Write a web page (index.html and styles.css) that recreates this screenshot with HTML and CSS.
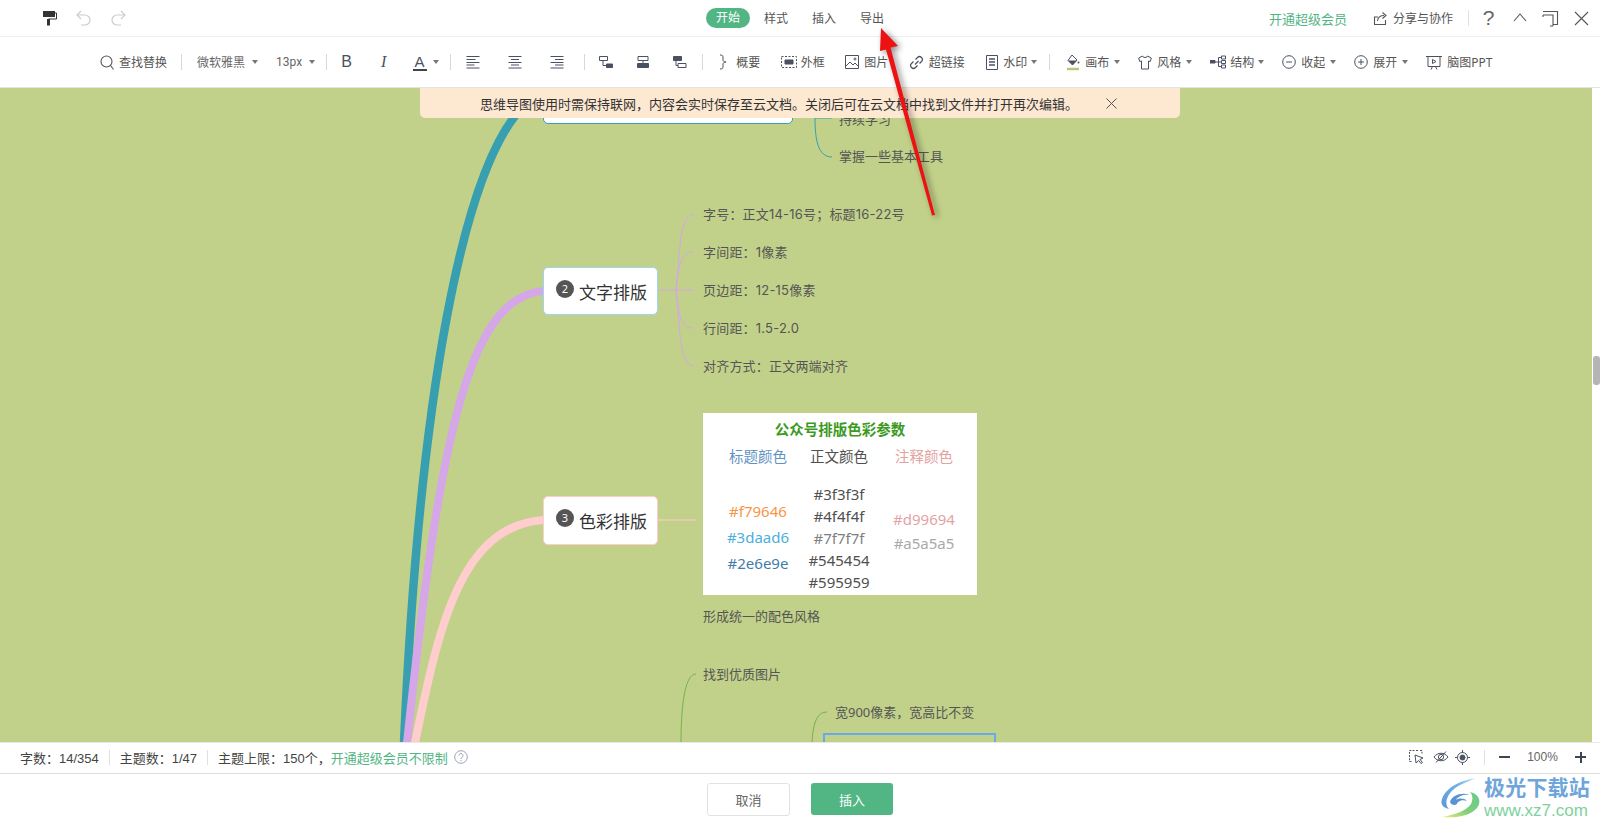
FILE: index.html
```html
<!DOCTYPE html>
<html lang="zh-CN">
<head>
    <meta charset="UTF-8">
    <meta name="viewport" content="width=device-width, initial-scale=1.0">
    <title>思维导图</title>
    <link rel="stylesheet" href="styles.css">
</head>
<body>
    <div class="topbar">
        <div class="top-left">
            <svg class="ic-roller" width="16" height="16" viewBox="0 0 16 16"><path d="M1 1h12v6H1z" fill="#333"/><path d="M13 3h1.500v6H6.500" fill="none" stroke="#333"/><path d="M5 9h3v6.500H5z" fill="#333"/></svg>
            <svg class="ic-hist" width="18" height="18" viewBox="0 0 18 18" fill="none" stroke="#ccc" stroke-width="1.2"><path d="M6 2 2 6l4 4"/><path d="M2 6h8a5 5 0 0 1 0 10H6"/></svg>
            <svg class="ic-hist" width="18" height="18" viewBox="0 0 18 18" fill="none" stroke="#ccc" stroke-width="1.2"><path d="m12 2 4 4-4 4"/><path d="M16 6H8a5 5 0 0 0 0 10h4"/></svg>
        </div>
        <div class="tabs">
            <span class="tab-on">开始</span>
            <span class="tab">样式</span>
            <span class="tab">插入</span>
            <span class="tab">导出</span>
        </div>
        <div class="top-right">
            <span class="vip">开通超级会员</span>
            <span class="share">
                <svg width="15" height="15" viewBox="0 0 15 15" fill="none" stroke="#555" stroke-width="1.1"><path d="M5 6H1.500v7.500h11V9"/><path d="M4.500 10C5 6 7.500 4.500 11 4.500"/><path d="M9.500 1.500l3.500 3-3.500 3"/></svg>
                分享与协作
            </span>
            <i class="top-sep"></i>
            <span class="win win-help">?</span>
            <span class="win"><svg width="14" height="14" viewBox="0 0 14 14" fill="none" stroke="#555" stroke-width="1.1"><path d="m1 10 6-7 6 7"/></svg></span>
            <span class="win"><svg width="17" height="17" viewBox="0 0 17 17" fill="none" stroke="#555" stroke-width="1.1"><path d="M1 1.500h14.500v13H11"/><path d="M1 5h10v11"/><path d="M1 5v2M11 16H8"/></svg></span>
            <span class="win"><svg width="15" height="15" viewBox="0 0 15 15" fill="none" stroke="#555" stroke-width="1.1"><path d="m1 1 13 13M14 1 1 14"/></svg></span>
        </div>
    </div>

    <div class="toolbar">
        <div class="tool">
            <svg width="14" height="15" viewBox="0 0 14 15" fill="none" stroke="#555" stroke-width="1.1"><circle cx="6.500" cy="6.500" r="5.500"/><path d="m10.500 10.500 3 4"/></svg>
            <span>查找替换</span>
        </div>
        <i class="sep sep-a"></i>
        <div class="tool tool-select font-name"><span>微软雅黑</span><i class="caret"></i></div>
        <div class="tool tool-select font-size"><span>13px</span><i class="caret"></i></div>
        <i class="sep sep-b"></i>
        <span class="cell cell-b">B</span>
        <span class="cell cell-i">I</span>
        <span class="cell cell-a"><span class="a-mark">A</span></span>
        <i class="caret caret-a"></i>
        <i class="sep sep-c"></i>
        <span class="cell-al"><svg width="14" height="14" viewBox="0 0 14 14" stroke="#4a5160"><path d="M.5 1.500h13M.5 4.500h9M.5 7.500h13M.5 10h8M.5 13h13"/></svg></span>
        <span class="cell-al"><svg width="14" height="14" viewBox="0 0 14 14" stroke="#4a5160"><path d="M.5 1.500h13M3 4.500h8M.5 7.500h13M3 10h8M.5 13h13"/></svg></span>
        <span class="cell-al"><svg width="14" height="14" viewBox="0 0 14 14" stroke="#4a5160"><path d="M.5 1.500h13M5 4.500h8.500M.5 7.500h13M5 10h8.500M.5 13h13"/></svg></span>
        <i class="sep sep-d"></i>
        <span class="cell"><svg width="14" height="14" viewBox="0 0 14 14" fill="none" stroke="#4a5160"><path d="M.5 1.500h8v4h-8zM4 5.500v5h3.500"/><path d="M7.500 9h6v3.500h-6z" fill="#4a5160"/></svg></span>
        <span class="cell"><svg width="14" height="14" viewBox="0 0 14 14" fill="none" stroke="#4a5160"><path d="M2 1.500h10v4H2zM7 5.500v3"/><path d="M1.500 8.500h11v4h-11z" fill="#4a5160"/></svg></span>
        <span class="cell"><svg width="14" height="14" viewBox="0 0 14 14" fill="none" stroke="#4a5160"><path d="M5 8.500h8v4H5zM3 5.500v5h2"/><path d="M.5 1.500h8v4h-8z" fill="#4a5160"/></svg></span>
        <i class="sep sep-e"></i>
        <div class="tool-group">
            <div class="tool">
                <svg width="14" height="16" viewBox="0 0 14 16" fill="none" stroke="#4a5160"><path d="M3 1c3 0 3 1 3 3v2c0 1 1 2 3 2-2 0-3 1-3 2v2c0 2 0 3-3 3"/></svg>
                <span>概要</span>
            </div>
            <div class="tool tool-tight">
                <svg width="16" height="12" viewBox="0 0 16 12" fill="none" stroke="#4a5160"><path d="M.5.5h15v11H.5z" stroke-dasharray="2 1.500"/><path d="M4 4h8v4H4z" fill="#4a5160"/></svg>
                <span>外框</span>
            </div>
            <div class="tool">
                <svg width="14" height="14" viewBox="0 0 14 14" fill="none" stroke="#4a5160"><path d="M.5.5h13v13H.5z"/><path d="m1 11 4-4 3 3 2-2 3 3"/><circle cx="10" cy="4" r="1"/></svg>
                <span>图片</span>
            </div>
            <div class="tool">
                <svg width="15" height="15" viewBox="0 0 15 15" fill="none" stroke="#4a5160" stroke-width="1.2"><path d="M6 9.500 9.500 6"/><path d="M6.500 4.500 8.500 2.500a2.800 2.800 0 0 1 4 4l-2 2"/><path d="M8.500 10.500l-2 2a2.800 2.800 0 0 1-4-4l2-2"/></svg>
                <span>超链接</span>
            </div>
            <div class="tool tool-tight">
                <svg width="14" height="15" viewBox="0 0 14 15" fill="none" stroke="#4a5160"><path d="M1.500.5h11v14h-11z"/><path d="M4 4h6M4 7h6M4 10h6" stroke-width="1.500"/></svg>
                <span>水印</span>
                <i class="caret"></i>
            </div>
        </div>
        <i class="sep sep-f"></i>
        <div class="tool-group tool-group-b">
            <div class="tool">
                <svg width="14" height="17" viewBox="0 0 14 17"><path d="M6 1 11 6 6.500 11 2 6.500z" fill="none" stroke="#4a5160"/><path d="M2 6.500h9L6.500 11z" fill="#4a5160"/><circle cx="12.500" cy="8.500" r="1" fill="#4a5160"/><path d="M1 15h12" stroke="#b5c77c" stroke-width="2.500"/></svg>
                <span>画布</span>
                <i class="caret"></i>
            </div>
            <div class="tool">
                <svg width="14" height="15" viewBox="0 0 14 15" fill="none" stroke="#4a5160"><path d="M4.500 1 .7 3l1 3.500L3.500 6v8h7V6l1.800.5 1-3.500-3.800-2C9.500 3 4.500 3 4.500 1z"/></svg>
                <span>风格</span>
                <i class="caret"></i>
            </div>
            <div class="tool tool-tight">
                <svg width="16" height="14" viewBox="0 0 16 14" fill="none" stroke="#4a5160"><path d="M0 5.500h5V8H0z" fill="#4a5160"/><path d="M5 7h3.500M8.500 2.500v9h3M8.500 2.500h3M8.500 7h3"/><path d="M11.500 1h4v3h-4zM11.500 5.500h4v3h-4zM11.500 10h4v3h-4z"/></svg>
                <span>结构</span>
                <i class="caret"></i>
            </div>
            <div class="tool">
                <svg width="14" height="14" viewBox="0 0 14 14" fill="none" stroke="#4a5160"><circle cx="7" cy="7" r="6.300"/><path d="M4 7h6"/></svg>
                <span>收起</span>
                <i class="caret"></i>
            </div>
            <div class="tool">
                <svg width="14" height="14" viewBox="0 0 14 14" fill="none" stroke="#4a5160"><circle cx="7" cy="7" r="6.300"/><path d="M4 7h6M7 4v6"/></svg>
                <span>展开</span>
                <i class="caret"></i>
            </div>
            <div class="tool">
                <svg width="16" height="15" viewBox="0 0 16 15" fill="none" stroke="#4a5160"><path d="M0 1.500h16M2 1.500v10h12v-10M5 14.500l1.500-3M11 14.500l-1.500-3"/><path d="M6.500 4.500v4L10 6.500z"/></svg>
                <span>脑图PPT</span>
            </div>
        </div>
    </div>

    <div class="main">
        <div class="canvas">
            <svg class="lines" width="1592" height="654" viewBox="0 88 1592 654" fill="none">
                <path d="M515 116C465 180 420 380 404 743" stroke="#379fb0" stroke-width="8.500"/>
                <path d="M544 291C470 296 440 430 407 743" stroke="#d5a6e8" stroke-width="8"/>
                <path d="M544 520C460 525 438 630 415 743" stroke="#ffcdcd" stroke-width="8"/>
                <path d="M815 118C815 140 818 157 832 157M815 118H832" stroke="#379fb0"/>
                <path stroke="#d5a6e8" d="M658 290H694M676 290C680 260 678 214 694 214M676 290C679 265 680 252 694 252M676 290C679 315 680 328 694 328M676 290C680 320 678 366 694 366"/>
                <path d="M658 520H696" stroke="#ffcdcd"/>
                <path d="M681 743C681 710 684 674 696 674" stroke="#74b24a"/>
                <path d="M812 743C813 725 816 712 827 712" stroke="#74b24a"/>
            </svg>

            <div class="node node-one"></div>
            <div class="note note-study">持续学习</div>
            <div class="note note-tools">掌握一些基本工具</div>

            <div class="node node-two"><b class="num">2</b>文字排版</div>
            <div class="leaves">
                <div>字号：正文14-16号；标题16-22号</div>
                <div>字间距：1像素</div>
                <div>页边距：12-15像素</div>
                <div>行间距：1.5-2.0</div>
                <div>对齐方式：正文两端对齐</div>
            </div>

            <div class="node node-three"><b class="num">3</b>色彩排版</div>
            <div class="palette">
                <div class="pal-title">公众号排版色彩参数</div>
                <div class="pal-cols pal-heads">
                    <span class="c-blue">标题颜色</span>
                    <span class="c-dark">正文颜色</span>
                    <span class="c-pink">注释颜色</span>
                </div>
                <div class="pal-cols pal-values">
                    <div class="pal-col pal-col-a">
                        <span class="c-orange">#f79646</span>
                        <span class="c-sky">#3daad6</span>
                        <span class="c-steel">#2e6e9e</span>
                    </div>
                    <div class="pal-col pal-col-b">
                        <span class="c-dark">#3f3f3f</span>
                        <span class="c-dark">#4f4f4f</span>
                        <span class="c-grey">#7f7f7f</span>
                        <span class="c-dark">#545454</span>
                        <span class="c-dark">#595959</span>
                    </div>
                    <div class="pal-col pal-col-c">
                        <span class="c-pink">#d99694</span>
                        <span class="c-light">#a5a5a5</span>
                    </div>
                </div>
            </div>
            <div class="note note-unify">形成统一的配色风格</div>
            <div class="note note-find">找到优质图片</div>
            <div class="note note-width">宽900像素，宽高比不变</div>
            <div class="pic-frame"></div>

            <div class="banner">
                <span>思维导图使用时需保持联网，内容会实时保存至云文档。关闭后可在云文档中找到文件并打开再次编辑。</span>
                <svg class="banner-x" width="11" height="11" viewBox="0 0 11 11" fill="none" stroke="#555"><path d="m.5.5 10 10M10.500.5l-10 10"/></svg>
            </div>
        </div>
        <div class="scroll"><i class="thumb"></i></div>
    </div>

    <div class="status">
        <span>字数：14/354</span>
        <i class="st-sep"></i>
        <span>主题数：1/47</span>
        <i class="st-sep"></i>
        <span>主题上限：150个，<span class="st-link">开通超级会员不限制</span></span>
        <svg class="st-help" width="14" height="14" viewBox="0 0 14 14" fill="none" stroke="#9aa3b5"><circle cx="7" cy="7" r="6.300"/><path d="M5 5.500a2 2 0 1 1 3 1.800c-.7.400-1 .8-1 1.700M7 10v1.200"/></svg>
        <div class="st-right">
            <svg width="15" height="14" viewBox="0 0 15 14" fill="none" stroke="#4a5160"><path d="M5.500.5H.5v11h3M7 .5h2M11 .5h2v3" stroke-dasharray="2 1.200"/><path d="m6 5 8 3-3 1.500 2.500 3-1.500 1-2.300-3L7 13z"/></svg>
            <svg width="16" height="14" viewBox="0 0 16 14" fill="none" stroke="#4a5160"><path d="M1 7c3.500-5 10.500-5 14 0-3.500 5-10.500 5-14 0z"/><circle cx="8" cy="7" r="2.600"/><path d="M3 12.500 13 1.500"/></svg>
            <svg class="st-target" width="15" height="15" viewBox="0 0 15 15" fill="none" stroke="#4a5160"><circle cx="7.500" cy="7.500" r="5"/><circle cx="7.500" cy="7.500" r="2.500" fill="#4a5160"/><path d="M7.500 0v2.500M7.500 12.500V15M0 7.500h2.500M12.500 7.500H15"/></svg>
            <i class="st-sep st-sep-r"></i>
            <i class="zoom-minus"></i>
            <span class="zoom-val">100%</span>
            <i class="zoom-plus"></i>
        </div>
    </div>

    <div class="footer">
        <button class="btn btn-cancel">取消</button>
        <button class="btn btn-insert">插入</button>
    </div>

    <div class="mark">
        <svg width="44" height="42" viewBox="0 0 44 42" fill="none">
            <defs>
                <linearGradient id="swirlBlue" x1="0" y1="1" x2="1" y2="0">
                    <stop offset="0" stop-color="#5f97d3"/>
                    <stop offset=".65" stop-color="#6fb4e6"/>
                    <stop offset="1" stop-color="#cfe8f7"/>
                </linearGradient>
                <linearGradient id="swirlGreen" x1="1" y1="0" x2="0" y2="1">
                    <stop offset="0" stop-color="#66c88a"/>
                    <stop offset=".55" stop-color="#7fd07e"/>
                    <stop offset="1" stop-color="#f0e977"/>
                </linearGradient>
            </defs>
            <path d="M36 1C22 3 6 10 2 22 0 28 4 31 9 32 3 26 8 14 20 8 26 5 32 3 36 1z" fill="url(#swirlBlue)"/>
            <path d="M10 25C12 18 22 15 30 18 24 17 18 19 16 23 19 21 24 21 27 24 22 22 17 25 17 27 15 29 11 28 10 25z" fill="#5a93cf"/>
            <path d="M30 15C40 17 42 26 36 32 28 40 14 41 2 40 14 38 26 34 31 27 33 23 33 18 30 15z" fill="url(#swirlGreen)"/>
        </svg>
        <div class="mark-text">
            <div class="mark-cn">极光下载站</div>
            <div class="mark-url">www.xz7.com</div>
        </div>
    </div>

    <svg class="arrow" width="1600" height="824" viewBox="0 0 1600 824">
        <path d="M881 28 898 46 890.500 47.500 935 215 932 215.500 886 49.500 880 51z" fill="#ee1111"/>
    </svg>
</body>
</html>
```

FILE: styles.css
```css
* {
    margin: 0;
    padding: 0;
    box-sizing: border-box;
}
body {
    width: 1600px;
    height: 824px;
    overflow: hidden;
    position: relative;
    display: flex;
    flex-direction: column;
    background: #fff;
    font-family: "Noto Sans", "Noto Sans CJK SC", sans-serif;
    font-size: 12px;
    color: #555;
}
svg {
    display: block;
    flex-shrink: 0;
}

/* top bar */
.topbar {
    height: 37px;
    display: grid;
    grid-template-columns: 706px auto 1fr;
    align-items: center;
    border-bottom: 1px solid #eee;
}
.top-left {
    display: flex;
    align-items: center;
    gap: 16px;
    padding-left: 42px;
}
.ic-roller {
    margin-right: 1px;
}
.tabs {
    display: flex;
    align-items: center;
}
.tab-on {
    width: 44px;
    height: 20px;
    line-height: 20px;
    margin-right: 2px;
    border-radius: 10px;
    background: #52b584;
    color: #fff;
    text-align: center;
}
.tab {
    width: 48px;
    text-align: center;
}
.top-right {
    display: flex;
    align-items: center;
    justify-content: flex-end;
    padding-right: 3px;
}
.vip {
    font-size: 13px;
    color: #52b584;
    margin-right: 26px;
}
.share {
    display: flex;
    align-items: center;
    gap: 5px;
    margin-right: 15px;
}
.top-sep {
    width: 1px;
    height: 16px;
    background: #e2e2e2;
    margin-right: 4px;
}
.win {
    width: 31px;
    display: flex;
    justify-content: center;
    align-items: center;
}
.win-help {
    font-family: "Liberation Sans", sans-serif;
    font-size: 21px;
    line-height: 20px;
    color: #666;
}

/* toolbar */
.toolbar {
    height: 51px;
    display: flex;
    align-items: center;
    padding-left: 100px;
    border-bottom: 1px solid #e3e3e3;
}
.tool {
    display: flex;
    align-items: center;
    gap: 5px;
    white-space: nowrap;
}
.tool-tight {
    gap: 4px;
}
.tool-select {
    gap: 7px;
    color: #666;
}
.font-name {
    margin-right: 18px;
}
.font-size {
    font-family: Roboto, sans-serif;
}
.caret {
    display: block;
    width: 0;
    height: 0;
    border: 3px solid transparent;
    border-top: 4px solid #777;
    border-bottom: 0;
}
.sep {
    display: block;
    width: 1px;
    height: 16px;
    background: #d8d8d8;
}
.sep-a { margin: 0 15px 0 14px; }
.sep-b { margin: 0 1px 0 11px; }
.sep-c { margin: 0 1px 0 11px; }
.sep-d { margin: 0 2px 0 6px; }
.sep-e { margin: 0 14px 0 4px; }
.sep-f { margin: 0 16px 0 12px; }
.cell {
    width: 37px;
    display: flex;
    justify-content: center;
    font-size: 16px;
    color: #4a5160;
}
.cell-b { font-family: "Liberation Sans", sans-serif; }
.cell-i {
    font-family: "Liberation Serif", serif;
    font-style: italic;
}
.cell-a {
    font-family: "Liberation Sans", sans-serif;
    margin-left: -1px;
}
.a-mark {
    width: 14px;
    height: 17px;
    line-height: 15px;
    font-size: 15px;
    text-align: center;
    border-bottom: 2px solid #444;
}
.caret-a {
    margin-left: -5px;
}
.cell-al {
    width: 42px;
    display: flex;
    justify-content: center;
}
.tool-group {
    display: flex;
    align-items: center;
    gap: 20.5px;
}
.tool-group-b {
    gap: 18px;
}

/* canvas */
.main {
    height: 654px;
    display: flex;
}
.canvas {
    width: 1592px;
    position: relative;
    overflow: hidden;
    background: #c2d18a;
}
.scroll {
    flex: 1;
    position: relative;
}
.thumb {
    position: absolute;
    top: 268px;
    left: 1px;
    width: 7px;
    height: 29px;
    border-radius: 3px;
    background: #b5b5b5;
}
.lines {
    position: absolute;
    top: 0;
    left: 0;
}
.banner {
    position: absolute;
    top: 0;
    left: 420px;
    width: 760px;
    height: 30px;
    display: flex;
    align-items: center;
    padding-left: 60px;
    border-radius: 0 0 5px 5px;
    background: #fde8d2;
    color: #333;
    font-size: 13px;
}
.banner-x {
    margin-left: 28px;
}
.node {
    position: absolute;
    display: flex;
    align-items: center;
    gap: 5px;
    padding-left: 12px;
    background: #fff;
    border: 1px solid #fff;
    border-radius: 5px;
    font-size: 17px;
    color: #333;
}
.node-one {
    left: 543px;
    top: -20px;
    width: 250px;
    height: 56px;
    border-color: #379fb0;
}
.node-two {
    left: 543px;
    top: 179px;
    width: 115px;
    height: 48px;
    border-color: #9ed4f5;
}
.node-three {
    left: 543px;
    top: 408px;
    width: 115px;
    height: 49px;
    border-color: #ffcdcd;
}
.num {
    width: 18px;
    height: 18px;
    margin-top: -5px;
    border-radius: 50%;
    background: #555;
    color: #fff;
    font-size: 11px;
    font-weight: 400;
    line-height: 18px;
    text-align: center;
}
.note {
    position: absolute;
    font-size: 13px;
    line-height: 20px;
    white-space: nowrap;
}
.note-study { left: 839px; top: 21px; }
.note-tools { left: 839px; top: 58px; }
.note-unify { left: 703px; top: 518px; }
.note-find { left: 703px; top: 576px; }
.note-width { left: 835px; top: 614px; }
.leaves {
    position: absolute;
    left: 703px;
    top: 116px;
    display: flex;
    flex-direction: column;
    gap: 18px;
    font-family: Inter, "Noto Sans CJK SC", sans-serif;
    font-size: 13px;
    letter-spacing: .2px;
    line-height: 20px;
}
.pic-frame {
    position: absolute;
    left: 823px;
    top: 645px;
    width: 173px;
    height: 40px;
    border: 2px solid #69a9ea;
}

/* picture of the colour table */
.palette {
    position: absolute;
    left: 703px;
    top: 325px;
    width: 274px;
    height: 182px;
    padding: 6px 0 0 14px;
    background: #fff;
    font-size: 14.5px;
    line-height: 20px;
}
.pal-title {
    width: 246px;
    text-align: center;
    font-weight: 700;
    color: #3c9a1e;
}
.pal-cols {
    display: grid;
    grid-template-columns: 82px 80px 90px;
    text-align: center;
}
.pal-heads {
    margin-top: 7px;
}
.pal-values {
    margin-top: 17px;
    font-size: 15px;
}
.pal-col {
    display: flex;
    flex-direction: column;
}
.pal-col-a {
    padding-top: 15px;
    line-height: 26px;
}
.pal-col-b {
    line-height: 22px;
}
.pal-col-c {
    padding-top: 24px;
    line-height: 24px;
}
.c-blue { color: #5f93c3; }
.c-dark { color: #505050; }
.c-pink { color: #e3a3a3; }
.c-orange { color: #f79646; }
.c-sky { color: #4bb0da; }
.c-steel { color: #3f7cab; }
.c-grey { color: #7f7f7f; }
.c-light { color: #a9a9a9; }

/* status bar */
.status {
    height: 32px;
    display: flex;
    align-items: center;
    padding: 0 0 2px 20px;
    border-top: 1px solid #e8e8e8;
    border-bottom: 1px solid #ddd;
    font-family: "Liberation Sans", "Noto Sans CJK SC", sans-serif;
    font-size: 13px;
    color: #444;
}
.st-sep {
    display: block;
    width: 1px;
    height: 15px;
    margin: 0 10px;
    background: #e0e0e0;
}
.st-link {
    color: #52b584;
}
.st-help {
    margin-left: 6px;
}
.st-right {
    margin-left: auto;
    display: flex;
    align-items: center;
    gap: 9px;
    padding-right: 14px;
}
.st-target {
    margin-left: -3px;
}
.st-sep-r {
    margin: 0 5px;
}
.zoom-minus, .zoom-plus {
    display: block;
    position: relative;
    width: 11px;
    height: 2px;
    background: #3c4456;
}
.zoom-plus::after {
    content: "";
    position: absolute;
    left: 4.5px;
    top: -4.5px;
    width: 2px;
    height: 11px;
    background: #3c4456;
}
.zoom-val {
    width: 47px;
    text-align: center;
    font-size: 12px;
    color: #666;
}

/* footer */
.footer {
    flex: 1;
    display: flex;
    justify-content: center;
    align-items: center;
    gap: 21px;
}
.btn {
    height: 32px;
    border-radius: 3px;
    font: 13px "Noto Sans", "Noto Sans CJK SC", sans-serif;
}
.btn-cancel {
    width: 83px;
    height: 33px;
    background: #fff;
    border: 1px solid #e2e2e2;
    color: #666;
}
.btn-insert {
    width: 82px;
    background: #52b584;
    border: 0;
    color: #fff;
}

/* watermark and annotation on top of the shot */
.mark {
    position: absolute;
    left: 1440px;
    top: 774px;
    display: flex;
    align-items: center;
}
.mark-cn {
    font-size: 21px;
    line-height: 27px;
    font-weight: 700;
    color: #6ea5da;
    letter-spacing: .2px;
}
.mark-url {
    font-family: "Liberation Sans", sans-serif;
    font-size: 17px;
    line-height: 20px;
    color: #7ed19d;
}
.arrow {
    position: absolute;
    top: 0;
    left: 0;
    filter: drop-shadow(3px 2px 3px rgba(0, 0, 0, .45));
}
```
